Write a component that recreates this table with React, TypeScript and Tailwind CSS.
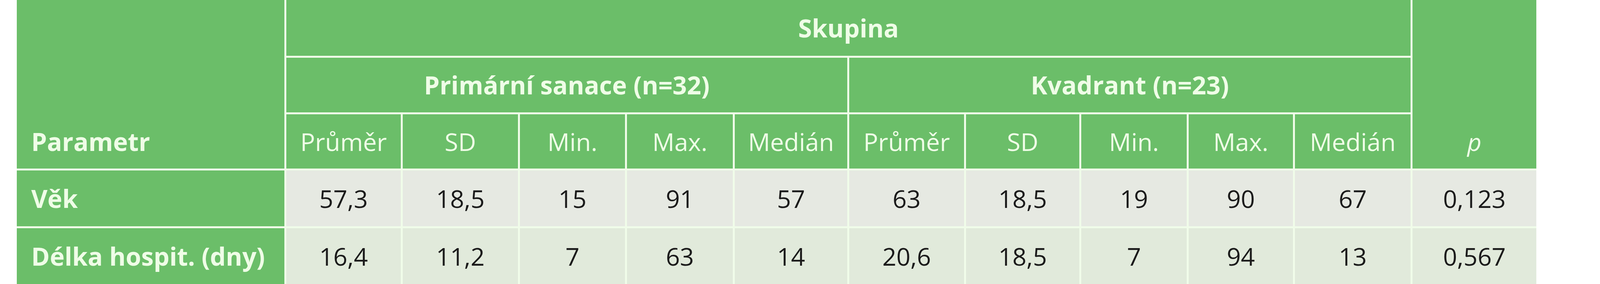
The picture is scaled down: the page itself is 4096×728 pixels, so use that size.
import React from "react";

// Tabulka: Skupina – primární sanace vs. kvadrant
const HEAD = "flex items-center justify-center bg-[#6bbe69] text-[#effde7]";
const SUB = ["Průměr", "SD", "Min.", "Max.", "Medián"];

const ROWS: { label: string; values: string[]; bg: string }[] = [
  {
    label: "Věk",
    values: ["57,3", "18,5", "15", "91", "57", "63", "18,5", "19", "90", "67", "0,123"],
    bg: "bg-[#e6e9e2]",
  },
  {
    label: "Délka hospit. (dny)",
    values: ["16,4", "11,2", "7", "63", "14", "20,6", "18,5", "7", "94", "13", "0,567"],
    bg: "bg-[#e1eadb]",
  },
];

export default function App() {
  return (
    <div className="h-[728px] w-[4096px] overflow-hidden bg-white pl-[43px] font-['Open_Sans',sans-serif] text-[63px] leading-none">
      <div className="grid w-[3890px] grid-cols-[685px_293px_295px_269px_271px_288px_294px_290px_270px_267px_296px_317px] grid-rows-[143px_140px_139px_143px_143px] gap-[5px] bg-[#f0fce9]">
        {/* levý sloupec přes tři řádky hlavičky */}
        <div className="row-span-3 flex flex-col justify-end bg-[#6bbe69] text-[#effde7]">
          <div className="flex h-[139px] items-center pl-[37px] text-[64px] font-bold">Parametr</div>
        </div>
        <div className={HEAD + " col-span-10 text-[64px] font-bold"}>Skupina</div>
        <div className="row-span-3 flex flex-col justify-end bg-[#6bbe69] text-[#effde7]">
          <div className="flex h-[139px] items-center justify-center italic">p</div>
        </div>

        <div className={HEAD + " col-span-5 text-[64px] font-bold"}>Primární sanace (n=32)</div>
        <div className={HEAD + " col-span-5 text-[64px] font-bold"}>Kvadrant (n=23)</div>

        {[...SUB, ...SUB].map((s, i) => (
          <div key={i} className={HEAD}>
            {s}
          </div>
        ))}

        {ROWS.map((r) => (
          <React.Fragment key={r.label}>
            <div className="flex items-center bg-[#6bbe69] pl-[37px] text-[64px] font-bold text-[#effde7]">
              {r.label}
            </div>
            {r.values.map((v, i) => (
              <div key={i} className={"flex items-center justify-center text-[#1b1b1b] " + r.bg}>
                {v}
              </div>
            ))}
          </React.Fragment>
        ))}
      </div>
    </div>
  );
}
